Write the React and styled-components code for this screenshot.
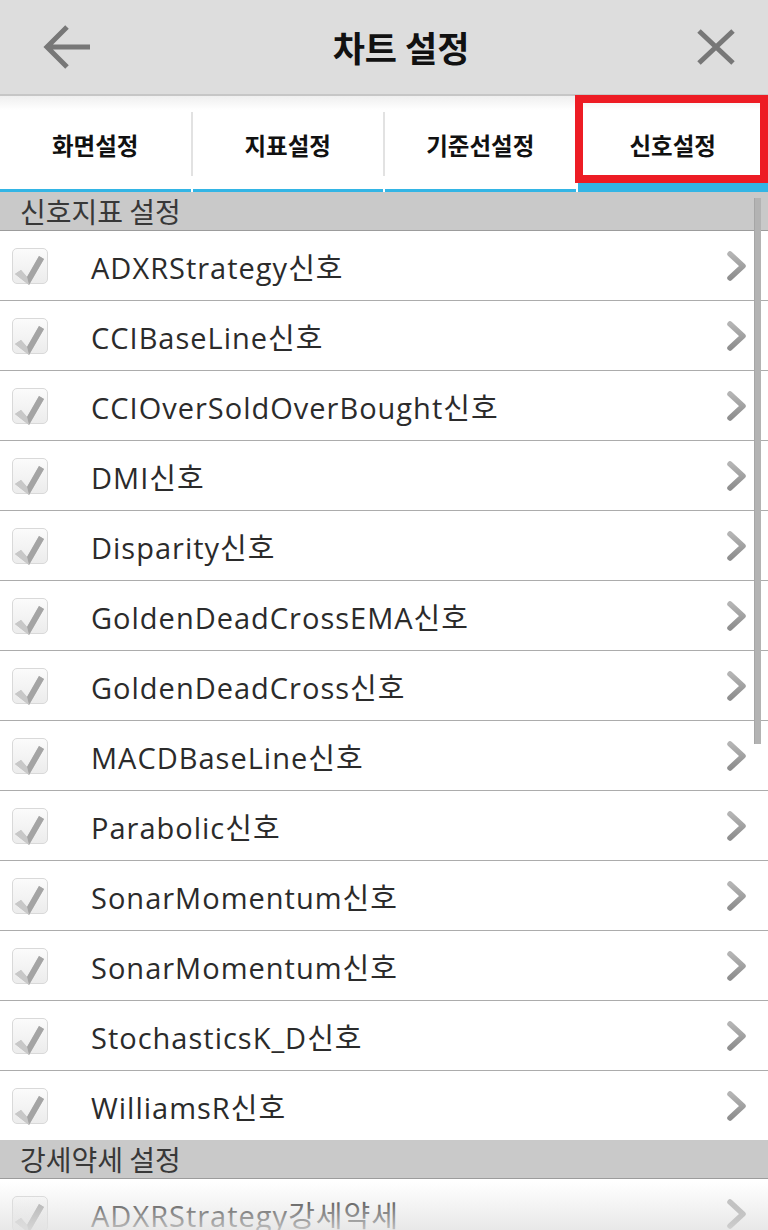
import React from 'react';
import styled, { createGlobalStyle } from 'styled-components';

const GlobalStyle = createGlobalStyle`
  html, body {
    margin: 0;
    padding: 0;
    background: #ffffff;
  }
  body {
    font-family: "Open Sans", "Noto Sans CJK KR", sans-serif;
  }
  * {
    box-sizing: border-box;
  }
`;

const Page = styled.div`
  position: relative;
  width: 768px;
  height: 1230px;
  overflow: hidden;
  background: #ffffff;
`;

const TopBar = styled.header`
  height: 96px;
  display: flex;
  align-items: center;
  background: #dddddd;
  border-bottom: 2px solid #c6c6c6;
`;

const BarButton = styled.div`
  width: ${props => props.width}px;
  flex: none;
  height: 100%;
  display: flex;
  align-items: center;
  justify-content: ${props => props.align};
  padding-left: ${props => props.left || 0}px;
  padding-right: ${props => props.right || 0}px;

  svg {
    flex: none;
  }
`;

const Title = styled.h1`
  flex: 1;
  margin: 0 0 2px;
  text-align: center;
  font-family: "Noto Sans CJK KR", sans-serif;
  font-size: 35px;
  font-weight: 700;
  color: #111111;
`;

const TabBar = styled.nav`
  height: 96px;
  display: flex;
  background: linear-gradient(#efefef 0, #ffffff 14px);
`;

const Tab = styled.div`
  position: relative;
  flex: 1;
  display: flex;
  align-items: center;
  justify-content: center;
  padding-top: 2px;
  font-family: "Noto Sans CJK KR", sans-serif;
  font-size: 23.5px;
  font-weight: 700;
  color: #111111;
  box-shadow: inset 0 ${props => (props.active ? '-9px' : '-3px')} 0 #33b5e5;

  ${props => props.active && `
    &::after {
      content: '';
      position: absolute;
      top: -1px;
      left: -3px;
      right: 0;
      bottom: 9px;
      border: 8px solid #ed1c24;
    }
  `}
`;

const TabDivider = styled.div`
  width: 2px;
  height: 64px;
  margin-top: 16px;
  background: #e2e2e2;
`;

const SectionHeader = styled.div`
  height: 39px;
  display: flex;
  align-items: center;
  padding-left: 20px;
  background: #c9c9c9;
  border-bottom: 1px solid #9c9c9c;
  font-family: "Noto Sans CJK KR", sans-serif;
  font-size: 28px;
  color: #383838;
`;

const List = styled.ul`
  margin: 0;
  padding: 0;
  list-style: none;
`;

const Row = styled.li`
  height: 70px;
  display: flex;
  align-items: center;
  padding: 0 20px 0 12px;
  border-bottom: 1px solid #acacac;

  &:last-child {
    border-bottom: none;
    height: 69px;
  }
`;

const CheckBox = styled.div`
  width: 36px;
  height: 36px;
  flex: none;
  border: 1px solid #d9d9d9;
  border-radius: 5px;
  background: linear-gradient(#fbfbfb, #ececec);
  display: flex;
  align-items: flex-end;
  justify-content: center;
  overflow: visible;
`;

const Label = styled.span`
  flex: 1;
  margin-left: 43px;
  font-size: 29px;
  color: #2b2b2b;
  white-space: nowrap;
  letter-spacing: 1px;
`;

const ScrollThumb = styled.div`
  position: absolute;
  left: 754px;
  top: 198px;
  width: 7px;
  height: 546px;
  background: #b3b3b3;
  border-left: 1px solid #a6a6a6;
`;

const BottomFade = styled.div`
  position: absolute;
  left: 0;
  right: 0;
  bottom: 0;
  height: 48px;
  background: linear-gradient(rgba(228, 228, 228, 0), rgba(226, 226, 226, 0.8));
  pointer-events: none;
`;

const BackIcon = () => (
  <svg width="50" height="46" viewBox="0 0 50 46">
    <path d="M25 3 L5 23 L25 43 M5 23 H48" fill="none" stroke="#777777" strokeWidth="5" />
  </svg>
);

const CloseIcon = () => (
  <svg width="40" height="36" viewBox="0 0 40 36">
    <path d="M3 2 L37 34 M37 2 L3 34" fill="none" stroke="#777777" strokeWidth="5" />
  </svg>
);

const Chevron = () => (
  <svg width="22" height="32" viewBox="0 0 22 32">
    <defs>
      <linearGradient id="chev" x1="0" y1="0" x2="0" y2="1">
        <stop offset="0" stopColor="#b4b4b4" />
        <stop offset="1" stopColor="#8e8e8e" />
      </linearGradient>
    </defs>
    <polyline points="4,4 17,16 4,28" fill="none" stroke="url(#chev)" strokeWidth="5.5" strokeLinecap="round" strokeLinejoin="round" />
  </svg>
);

const CheckMark = () => (
  <svg width="30" height="32" viewBox="0 0 30 32" style={{ marginBottom: -3 }}>
    <path d="M0 20 L6 16 L12 23 L24 2 L29 5 L14 31 Z" fill="#bcbcbc" />
    <path d="M12 23 L24 2 L29 5 L14 31 Z" fill="#a4a4a4" />
    <path d="M0 20 L6 16 L12 23 L14 31 Z" fill="#c8c8c8" />
  </svg>
);

const signals = [
  'ADXRStrategy신호',
  'CCIBaseLine신호',
  'CCIOverSoldOverBought신호',
  'DMI신호',
  'Disparity신호',
  'GoldenDeadCrossEMA신호',
  'GoldenDeadCross신호',
  'MACDBaseLine신호',
  'Parabolic신호',
  'SonarMomentum신호',
  'SonarMomentum신호',
  'StochasticsK_D신호',
  'WilliamsR신호',
];

const strength = ['ADXRStrategy강세약세'];

const tabs = ['화면설정', '지표설정', '기준선설정', '신호설정'];

function SignalRow({ label }) {
  return (
    <Row>
      <CheckBox>
        <CheckMark />
      </CheckBox>
      <Label>{label}</Label>
      <Chevron />
    </Row>
  );
}

export default function App() {
  return (
    <Page>
      <GlobalStyle />
      <TopBar>
        <BarButton width={120} align="flex-start" left={42}>
          <BackIcon />
        </BarButton>
        <Title>차트 설정</Title>
        <BarButton width={86} align="flex-end" right={32}>
          <CloseIcon />
        </BarButton>
      </TopBar>

      <TabBar>
        {tabs.map((t, i) => (
          <React.Fragment key={t}>
            {i > 0 && <TabDivider />}
            <Tab active={i === tabs.length - 1}>{t}</Tab>
          </React.Fragment>
        ))}
      </TabBar>

      <SectionHeader>신호지표 설정</SectionHeader>
      <List>
        {signals.map((s, i) => (
          <SignalRow key={i} label={s} />
        ))}
      </List>

      <SectionHeader>강세약세 설정</SectionHeader>
      <List>
        {strength.map((s, i) => (
          <SignalRow key={i} label={s} />
        ))}
      </List>

      <ScrollThumb />
      <BottomFade />
    </Page>
  );
}
